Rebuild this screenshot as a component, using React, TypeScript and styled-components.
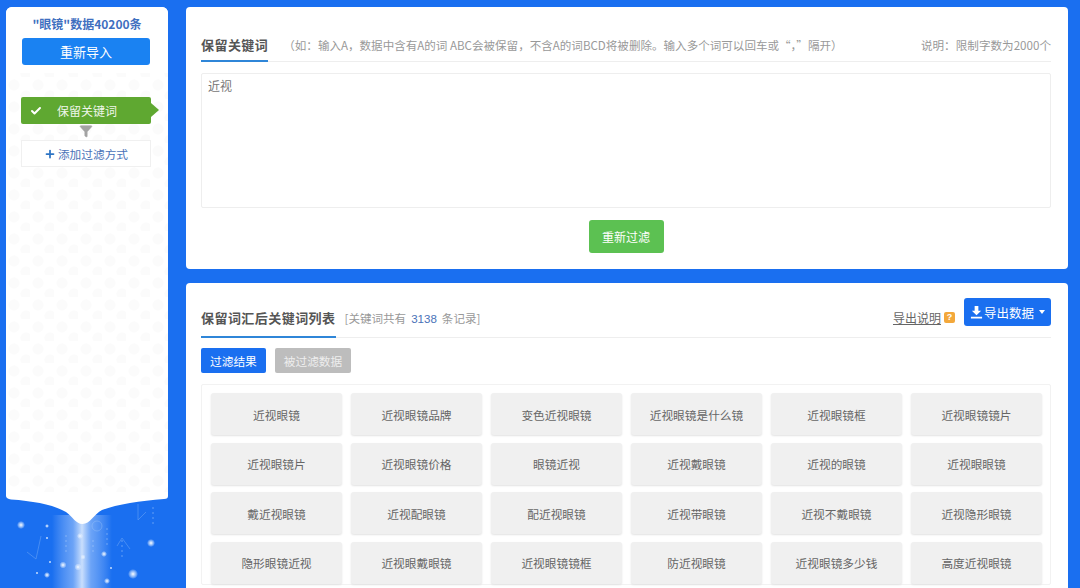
import React from "react";
import styled, { createGlobalStyle } from "styled-components";
import { Check, Filter, Plus } from "lucide-react";

const keywords = [
  "近视眼镜", "近视眼镜品牌", "变色近视眼镜", "近视眼镜是什么镜", "近视眼镜框", "近视眼镜镜片",
  "近视眼镜片", "近视眼镜价格", "眼镜近视", "近视戴眼镜", "近视的眼镜", "近视眼眼镜",
  "戴近视眼镜", "近视配眼镜", "配近视眼镜", "近视带眼镜", "近视不戴眼镜", "近视隐形眼镜",
  "隐形眼镜近视", "近视眼戴眼镜", "近视眼镜镜框", "防近视眼镜", "近视眼镜多少钱", "高度近视眼镜",
];

// x, y, radius, in page coordinates
const sparks = [
  [21, 525, 4], [47, 526, 2], [80, 536, 3], [151, 543, 4], [47, 538, 1.5], [104, 554, 3],
  [63, 565, 3.5], [83, 557, 2.5], [78, 567, 3.5], [133, 574, 5], [47, 575, 3], [107, 581, 3],
  [37, 573, 1.5], [50, 562, 1.5], [111, 568, 1.5],
];

const GlobalStyle = createGlobalStyle`
  html, body {
    margin: 0;
    height: 100%;
    background: #1a6ff0;
  }
  body {
    font-family: "Noto Sans CJK SC", "Liberation Sans", sans-serif;
    font-size: 12px;
    color: #666;
  }
`;

const Shell = styled.div`
  display: flex;
  gap: 18px;
  height: 588px;
  padding: 7px 12px 0 6px;
  box-sizing: border-box;
  overflow: hidden;
`;

const Sidebar = styled.aside`
  width: 162px;
  flex-shrink: 0;
  display: flex;
  flex-direction: column;
`;

const SideCard = styled.div`
  height: 486px;
  flex-shrink: 0;
  padding: 0 16px;
  box-sizing: border-box;
  background-color: #fff;
  background-image:
    radial-gradient(circle at 8px 8px, #fbfbfb 5px, transparent 6px),
    radial-gradient(circle at 20px 19px, #fbfbfb 5px, transparent 6px);
  background-size: 24px 22px;
  background-position: 0 70px;
  border-radius: 6px 6px 0 0;
`;

const SideHead = styled.div`
  background: #fff;
  margin: 0 -16px;
  padding: 8px 16px 8px;
  border-radius: 6px 6px 0 0;
`;

const DataTitle = styled.div`
  color: #3f6fc0;
  font-size: 12px;
  font-weight: 700;
  line-height: 18px;
  text-align: center;
  white-space: nowrap;
`;

const ImportButton = styled.button`
  display: block;
  width: 128px;
  height: 27px;
  margin: 5px 0 0;
  padding: 0;
  border: 0;
  border-radius: 3px;
  background: #1a82f2;
  color: #fff;
  font: inherit;
  font-size: 13px;
`;

const StepTag = styled.div`
  position: relative;
  width: 130px;
  height: 27px;
  margin: 24px 0 0 -1px;
  display: flex;
  align-items: center;
  padding-left: 9px;
  box-sizing: border-box;
  background: #5fa831;
  border-radius: 2px;
  color: #fff;
  &::after {
    content: "";
    position: absolute;
    left: 100%;
    top: 6px;
    border-left: 8px solid #5fa831;
    border-top: 7.5px solid transparent;
    border-bottom: 7.5px solid transparent;
  }
`;

const StepLabel = styled.span`
  margin-left: 15px;
  opacity: 0.9;
`;

const FunnelRow = styled.div`
  width: 128px;
  height: 16px;
  display: flex;
  justify-content: center;
  color: #a3a3a3;
`;

const AddFilter = styled.div`
  width: 130px;
  height: 27px;
  margin-left: -1px;
  display: flex;
  align-items: center;
  justify-content: center;
  gap: 2px;
  box-sizing: border-box;
  background: #fff;
  border: 1px solid #f0f0f0;
  color: #4a72b8;
  font-size: 11.7px;
`;

const Notch = styled.svg`
  display: block;
  flex-shrink: 0;
  margin-top: -1px;
  position: relative;
  z-index: 1;
`;

const Glow = styled.svg`
  display: block;
  flex-shrink: 0;
  margin-left: -6px;
  margin-top: -64px;
`;

const Main = styled.main`
  flex: 1;
  min-width: 0;
  display: flex;
  flex-direction: column;
  gap: 14px;
`;

const Card = styled.section`
  padding: 0 17px 0 15px;
  background: #fff;
  border-radius: 4px;
  box-sizing: border-box;
`;

const FilterCard = styled(Card)`
  height: 262px;
  padding-top: 21px;
  flex-shrink: 0;
`;

const ResultCard = styled(Card)`
  flex: 1;
  padding-top: 15px;
  border-radius: 4px 4px 0 0;
`;

const TabBar = styled.div<{ $height: number }>`
  display: flex;
  align-items: center;
  height: ${(p) => p.$height}px;
  border-bottom: 1px solid #eee;
  box-sizing: border-box;
`;

const TabTitle = styled.div`
  align-self: stretch;
  display: flex;
  align-items: center;
  flex-shrink: 0;
  margin-bottom: -1px;
  color: #555;
  font-size: 13px;
  font-weight: 700;
  letter-spacing: 0.45px;
  border-bottom: 2px solid #2f86d8;
`;

const Hint = styled.span<{ $gap: number }>`
  margin-left: ${(p) => p.$gap}px;
  color: #999;
  font-size: 11.55px;
  white-space: nowrap;
`;

const Note = styled.span`
  margin-left: auto;
  color: #999;
  font-size: 11.6px;
  white-space: nowrap;
`;

const Count = styled.b`
  margin: 0 5px;
  color: #4a72b8;
  font-family: "Liberation Sans", sans-serif;
  font-weight: 400;
`;

const KeywordInput = styled.div`
  height: 135px;
  margin-top: 11px;
  padding: 3px 6px;
  box-sizing: border-box;
  border: 1px solid #eee;
  border-radius: 2px;
  color: #777;
  font-size: 12px;
  line-height: 18px;
`;

const ButtonRow = styled.div`
  display: flex;
  justify-content: center;
  margin-top: 12px;
`;

const RefilterButton = styled.button`
  width: 75px;
  height: 33px;
  padding: 0;
  border: 0;
  border-radius: 3px;
  background: #5cc152;
  color: #fff;
  font: inherit;
`;

const ExportHelp = styled.a`
  margin-left: auto;
  color: #666;
  font-size: 12px;
  text-decoration: underline;
`;

const HelpBadge = styled.span`
  width: 11px;
  height: 11px;
  margin: 0 9px 0 3px;
  background: #f3a83b;
  border-radius: 2px;
  color: #fff;
  font: 700 9px/11px "Liberation Sans", sans-serif;
  text-align: center;
`;

const ExportButton = styled.button`
  display: flex;
  align-items: center;
  justify-content: center;
  width: 87px;
  height: 28px;
  margin-bottom: 11px;
  padding: 0;
  border: 0;
  border-radius: 3px;
  background: #1a6ff0;
  color: #fff;
  font: inherit;
  font-size: 12.5px;
`;

const DownloadGlyph = styled.svg`
  margin-right: 1px;
`;

const Caret = styled.i`
  margin-left: 5px;
  border-top: 4px solid #fff;
  border-left: 3.5px solid transparent;
  border-right: 3.5px solid transparent;
`;

const ViewTabs = styled.div`
  display: flex;
  gap: 9px;
  margin-top: 10px;
`;

const ViewTab = styled.button<{ $active?: boolean }>`
  height: 25px;
  padding: 0 9px;
  border: 0;
  border-radius: 2px;
  background: ${(p) => (p.$active ? "#1a6ff0" : "#bdbdbd")};
  color: ${(p) => (p.$active ? "#fff" : "#eee")};
  font: inherit;
  font-size: 11.7px;
`;

const ChipPanel = styled.div`
  display: grid;
  grid-template-columns: repeat(6, 131px);
  grid-auto-rows: 42px;
  gap: 7.6px 9px;
  margin-top: 11px;
  padding: 8px 8px 0 9px;
  border: 1px solid #f2f2f2;
  border-radius: 2px;
`;

const Chip = styled.div`
  display: flex;
  align-items: center;
  justify-content: center;
  background: #f0f0f0;
  border-radius: 3px;
  box-shadow: 0 1px 2px #e2e2e2;
  color: #666;
  font-size: 11.7px;
  white-space: nowrap;
`;

const SideGlow = () => (
  <Glow width="174" height="128" viewBox="0 460 174 128">
    <defs>
      <linearGradient id="beam" x1="0" x2="1" y1="0" y2="0">
        <stop offset="0" stopColor="#fff" stopOpacity="0" />
        <stop offset="0.35" stopColor="#cfe3ff" stopOpacity="0.45" />
        <stop offset="0.5" stopColor="#e8f2ff" stopOpacity="0.85" />
        <stop offset="0.65" stopColor="#cfe3ff" stopOpacity="0.45" />
        <stop offset="1" stopColor="#fff" stopOpacity="0" />
      </linearGradient>
      <radialGradient id="spark">
        <stop offset="0" stopColor="#fff" />
        <stop offset="0.4" stopColor="#d8e9ff" stopOpacity="0.75" />
        <stop offset="1" stopColor="#fff" stopOpacity="0" />
      </radialGradient>
    </defs>
    <rect x="52" y="515" width="60" height="73" fill="url(#beam)" />
    {sparks.map(([x, y, r], i) => (
      <circle key={i} cx={x} cy={y} r={r} fill="url(#spark)" />
    ))}
    <g opacity="0.45">
      <path d="M27 552 L36 559 L41 536 M117 546 L122 538 L130 549 M138 504 L138 520 L146 512" fill="none" stroke="#a8cdfb" strokeWidth="0.7" />
      <path d="M66 535v20M107 528v18M93 540v15M122 540v20M153 507v18" stroke="#bcd9fd" strokeWidth="1" strokeDasharray="2 3" />
      <circle cx="97" cy="526" r="5" fill="none" stroke="#a8cdfb" strokeWidth="0.8" />
    </g>
  </Glow>
);

export default function App() {
  return (
    <>
      <GlobalStyle />
      <Shell>
        <Sidebar>
          <SideCard>
            <SideHead>
              <DataTitle>"眼镜"数据40200条</DataTitle>
              <ImportButton>重新导入</ImportButton>
            </SideHead>
            <StepTag>
              <Check size={12} strokeWidth={4} />
              <StepLabel>保留关键词</StepLabel>
            </StepTag>
            <FunnelRow>
              <Filter size={14} fill="currentColor" strokeWidth={1} />
            </FunnelRow>
            <AddFilter>
              <Plus size={12} strokeWidth={3.5} color="#2d74c4" />
              添加过滤方式
            </AddFilter>
          </SideCard>
          <Notch width="162" height="32" viewBox="0 0 162 32">
            <path
              d="M0 0H162V4C162 6 161 7 158 7C134 9 112 12 96 18C88 22 84 32 76.5 32C70 32 67 25 60 20C48 13 28 9 5 7.5C2 7 0 6 0 4Z"
              fill="#fff"
            />
          </Notch>
          <SideGlow />
        </Sidebar>
        <Main>
          <FilterCard>
            <TabBar $height={34}>
              <TabTitle>保留关键词</TabTitle>
              <Hint $gap={15}>（如：输入A，数据中含有A的词 ABC会被保留，不含A的词BCD将被删除。输入多个词可以回车或“，”隔开）</Hint>
              <Note>说明：限制字数为2000个</Note>
            </TabBar>
            <KeywordInput>近视</KeywordInput>
            <ButtonRow>
              <RefilterButton>重新过滤</RefilterButton>
            </ButtonRow>
          </FilterCard>
          <ResultCard>
            <TabBar $height={40}>
              <TabTitle>保留词汇后关键词列表</TabTitle>
              <Hint $gap={9}>
                [关键词共有<Count>3138</Count>条记录]
              </Hint>
              <ExportHelp href="#">导出说明</ExportHelp>
              <HelpBadge>?</HelpBadge>
              <ExportButton>
                <DownloadGlyph width="13" height="13" viewBox="0 0 14 14" fill="#fff">
                  <path d="M5 0h4v5h3l-5 5-5-5h3zM1 11.500h12v2H1z" />
                </DownloadGlyph>
                导出数据
                <Caret />
              </ExportButton>
            </TabBar>
            <ViewTabs>
              <ViewTab $active>过滤结果</ViewTab>
              <ViewTab>被过滤数据</ViewTab>
            </ViewTabs>
            <ChipPanel>
              {keywords.map((k) => (
                <Chip key={k}>{k}</Chip>
              ))}
            </ChipPanel>
          </ResultCard>
        </Main>
      </Shell>
    </>
  );
}
